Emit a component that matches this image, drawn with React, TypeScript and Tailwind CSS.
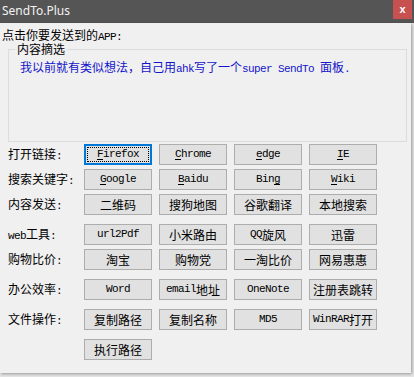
import React from 'react';

const mono = "font-['Liberation_Mono'] text-[11px] tracking-[-0.6px] whitespace-pre";
const cjk = "font-['Noto_Sans_CJK_SC'] text-[12px]";

interface Item {
  t: string;
  u?: number;
  focus?: boolean;
}

interface Row {
  label: string;
  items: (string | Item)[];
  gap?: boolean;
}

const rows: Row[] = [
  {
    label: '打开链接:',
    items: [
      { t: 'Firefox', u: 0, focus: true },
      { t: 'Chrome', u: 0 },
      { t: 'edge', u: 0 },
      { t: 'IE', u: 0 },
    ],
  },
  {
    label: '搜索关键字:',
    items: [
      { t: 'Google', u: 0 },
      { t: 'Baidu', u: 0 },
      { t: 'Bing', u: 3 },
      { t: 'Wiki', u: 0 },
    ],
  },
  { label: '内容发送:', items: ['二维码', '搜狗地图', '谷歌翻译', '本地搜索'] },
  { label: 'web工具:', items: ['url2Pdf', '小米路由', 'QQ旋风', '迅雷'], gap: true },
  { label: '购物比价:', items: ['淘宝', '购物党', '一淘比价', '网易惠惠'] },
  { label: '办公效率:', items: ['Word', 'email地址', 'OneNote', '注册表跳转'], gap: true },
  { label: '文件操作:', items: ['复制路径', '复制名称', 'MD5', 'WinRAR打开'], gap: true },
  { label: '', items: ['执行路径'], gap: true },
];

// splits ascii runs (SimSun-like mono) from CJK runs
function Mixed({ text, u }: { text: string; u?: number }) {
  const parts = text.match(/[\x20-\x7e]+|[^\x20-\x7e]+/g) ?? [];
  let idx = 0;
  return (
    <>
      {parts.map((p, i) => {
        const start = idx;
        idx += p.length;
        const cls = /^[\x20-\x7e]/.test(p) ? mono : cjk;
        if (u !== undefined && u >= start && u < start + p.length) {
          const k = u - start;
          return (
            <span key={i} className={cls}>
              {p.slice(0, k)}
              <u className="underline underline-offset-2">{p[k]}</u>
              {p.slice(k + 1)}
            </span>
          );
        }
        return (
          <span key={i} className={cls}>
            {p}
          </span>
        );
      })}
    </>
  );
}

function Btn({ item }: { item: string | Item }) {
  const it: Item = typeof item === 'string' ? { t: item } : item;
  return (
    <button
      className={`w-[68px] h-[21px] flex items-center justify-center bg-[#e1e1e1] text-black leading-[19px] ${
        it.focus
          ? 'border-2 border-[#0078d7] outline-1 outline-dotted outline-black outline-offset-[-4px]'
          : 'border border-[#adadad]'
      }`}
    >
      <Mixed text={it.t} u={it.u} />
    </button>
  );
}

export default function App() {
  return (
    <div className="w-[414px] h-[377px] bg-[#e6e6e6] overflow-hidden font-['Noto_Sans_CJK_SC',sans-serif] text-black">
      {/* Title bar */}
      <div className="w-[414px] h-[23px] bg-[#555555] flex items-start justify-between">
        <span className="pl-[2px] pt-[3px] text-[12px] leading-[16px] text-[#f2f2f2] font-['Noto_Sans',sans-serif]">
          SendTo.Plus
        </span>
        <div className="w-[19px] h-[19px] mr-[2px] bg-[#c75050] flex items-center justify-center text-white text-[11px] font-bold font-['Liberation_Sans',sans-serif] leading-none">
          x
        </div>
      </div>

      {/* Body */}
      <div className="w-[411px] h-[350px] bg-[#f0f0f0] shadow-[1px_1px_3px_rgba(0,0,0,0.35)] pt-[4px]">
        <div className="pl-[2px] h-[15px] leading-[15px] text-[12px]">
          <Mixed text="点击你要发送到的APP:" />
        </div>

        <fieldset className="mx-[8px] w-[399px] border border-[#dcdcdc] pl-[6px] pr-0 pb-0 pt-0">
          <legend className="px-[2px] text-[12px] leading-[14px]">内容摘选</legend>
          <div className="h-[85px] pl-[5px] pt-[1px] leading-[16px] text-[#1414c8]">
            <Mixed text="我以前就有类似想法，自己用ahk写了一个super SendTo 面板." />
          </div>
        </fieldset>

        <div className="mt-[2px] flex flex-col">
          {rows.map((r, i) => (
            <div key={i} className={`flex items-center h-[21px] ${i === 0 ? '' : r.gap ? 'mt-[9px]' : 'mt-[4px]'}`}>
              <div className="w-[84px] pl-[8px] text-[12px] leading-[16px]">
                <Mixed text={r.label} />
              </div>
              <div className="flex gap-[7px]">
                {r.items.map((it, j) => (
                  <Btn key={j} item={it} />
                ))}
              </div>
            </div>
          ))}
        </div>
      </div>
    </div>
  );
}
